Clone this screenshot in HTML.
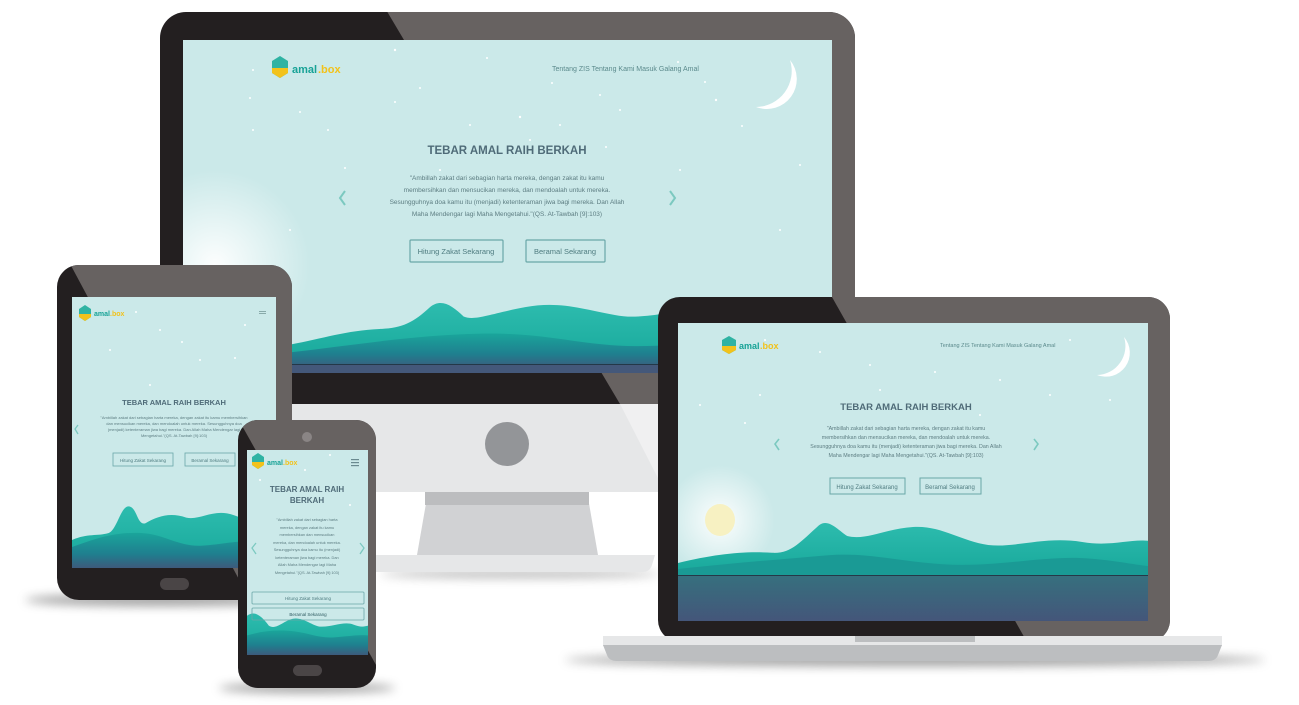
<!DOCTYPE html>
<html><head><meta charset="utf-8"><style>
html,body{margin:0;padding:0;background:#fff;width:1299px;height:705px;overflow:hidden}
svg{display:block}
text{font-family:"Liberation Sans",sans-serif}
</style></head><body>
<svg width="1299" height="705" viewBox="0 0 1299 705" xmlns="http://www.w3.org/2000/svg">
<defs>
<linearGradient id="mtB" x1="0" y1="0" x2="0" y2="1"><stop offset="0" stop-color="#2dbcae"/><stop offset="1" stop-color="#17a79a"/></linearGradient>
<linearGradient id="mtF" x1="0" y1="0" x2="0" y2="1"><stop offset="0" stop-color="#1aa59b"/><stop offset="0.6" stop-color="#1f7f8f"/><stop offset="1" stop-color="#3d5a7c"/></linearGradient>
<linearGradient id="sea" x1="0" y1="0" x2="0" y2="1"><stop offset="0" stop-color="#36707e"/><stop offset="1" stop-color="#44567a"/></linearGradient>
<radialGradient id="glow"><stop offset="0" stop-color="#ffffff" stop-opacity="0.95"/><stop offset="1" stop-color="#ffffff" stop-opacity="0"/></radialGradient>
<filter id="blur" x="-20%" y="-200%" width="140%" height="500%"><feGaussianBlur stdDeviation="5"/></filter>
<clipPath id="cMon"><rect x="160" y="12" width="695" height="392" rx="26"/></clipPath>
<clipPath id="cLap"><rect x="658" y="297" width="512" height="345" rx="22"/></clipPath>
<clipPath id="cTab"><rect x="57" y="265" width="235" height="335" rx="22"/></clipPath>
<clipPath id="cPh"><rect x="238" y="420" width="138" height="268" rx="20"/></clipPath>
<clipPath id="sMon"><rect x="183" y="40" width="649" height="333"/></clipPath>
<clipPath id="sLap"><rect x="678" y="323" width="470" height="298"/></clipPath>
<clipPath id="sTab"><rect x="72" y="297" width="204" height="271"/></clipPath>
<clipPath id="sPh"><rect x="247" y="450" width="121" height="205"/></clipPath>
<g id="mtn">
<path d="M0 70 C6 62 10 52 16 50 C20 49 22 42 25 22 C27 10 29 20 31 34 C33 40 36 30 42 22 C48 14 52 24 58 32 C62 38 66 30 72 26 C78 22 82 34 88 38 C92 40 96 34 100 33 V100 H0Z" fill="url(#mtB)"/>
<path d="M0 80 C12 70 22 58 34 56 C46 54 52 72 62 72 C72 72 78 60 86 62 C92 63 96 70 100 72 V100 H0Z" fill="url(#mtF)"/>
</g>
</defs>

<!-- MONITOR stand -->
<ellipse cx="520" cy="574" rx="140" ry="4" fill="#888" filter="url(#blur)" opacity="0.6"/>
<rect x="290" y="398" width="370" height="94" fill="#e6e7e8"/>
<path d="M618 400 L660 400 L660 482Z" fill="#f0f0f1"/>
<circle cx="507" cy="444" r="22" fill="#939598"/>
<path d="M428 492 L587 492 L598 555 L417 555Z" fill="#d1d2d4"/>
<rect x="425" y="492" width="164" height="13" fill="#bcbdbf"/>
<path d="M360 555 H655 L652 565 Q650 572 642 572 H370 Z" fill="#e6e7e8"/>
<!-- monitor body -->
<g clip-path="url(#cMon)">
<rect x="160" y="12" width="695" height="392" fill="#231f20"/>
<polygon points="385,8 860,8 860,404 620,404" fill="#676261"/>
</g>
<g clip-path="url(#sMon)">
<rect x="183" y="40" width="649" height="333" fill="#cbe9e9"/>
<circle cx="215" cy="265" r="95" fill="url(#glow)"/>
<g fill="#fff">
<circle cx="253" cy="70" r="1"/><circle cx="395" cy="50" r="1.2"/><circle cx="420" cy="88" r="1"/><circle cx="487" cy="58" r="1"/><circle cx="552" cy="83" r="1"/><circle cx="600" cy="95" r="1"/><circle cx="678" cy="62" r="1"/><circle cx="716" cy="100" r="1.2"/><circle cx="742" cy="126" r="1"/><circle cx="253" cy="130" r="1"/><circle cx="300" cy="112" r="1"/><circle cx="345" cy="168" r="1"/><circle cx="395" cy="102" r="1"/><circle cx="470" cy="125" r="1"/><circle cx="520" cy="117" r="1.2"/><circle cx="560" cy="125" r="1"/><circle cx="606" cy="147" r="1"/><circle cx="680" cy="170" r="1"/><circle cx="250" cy="98" r="1"/><circle cx="800" cy="165" r="1"/><circle cx="328" cy="130" r="1"/><circle cx="440" cy="170" r="1"/><circle cx="620" cy="110" r="1"/><circle cx="705" cy="82" r="1"/><circle cx="530" cy="140" r="1"/><circle cx="290" cy="230" r="1"/><circle cx="780" cy="230" r="1"/>
</g>
<path d="M790 60 A30 30 0 0 1 756 107 A36 36 0 0 0 790 60Z" fill="#fff"/>
<path d="M272 61 L280 56 L288 61 L288 73 L280 78 L272 73Z" fill="#2fb3a3"/><path d="M272 68 L288 68 L288 73 L280 78 L272 73Z" fill="#f2c21b"/>
<text x="292" y="73" font-size="11" font-weight="bold" fill="#17a296">amal</text><text x="318" y="73" font-size="11" font-weight="bold" fill="#f2c21b">.box</text>
<text x="552" y="71" font-size="7" fill="#5b8a8c">Tentang ZIS   Tentang Kami   Masuk   Galang Amal</text>
<text x="507" y="154" font-size="11.5" font-weight="bold" fill="#4f6b78" text-anchor="middle">TEBAR AMAL RAIH BERKAH</text>
<g font-size="6.5" fill="#5d7d82" text-anchor="middle">
<text x="507" y="180">"Ambillah zakat dari sebagian harta mereka, dengan zakat itu kamu</text>
<text x="507" y="192">membersihkan dan mensucikan mereka, dan mendoalah untuk mereka.</text>
<text x="507" y="204">Sesungguhnya doa kamu itu (menjadi) ketenteraman jiwa bagi mereka. Dan Allah</text>
<text x="507" y="216">Maha Mendengar lagi Maha Mengetahui."(QS. At-Tawbah [9]:103)</text>
</g>
<path d="M345 191 L340 198 L345 205" stroke="#7cc9c0" stroke-width="2" fill="none"/><path d="M670 191 L675 198 L670 205" stroke="#7cc9c0" stroke-width="2" fill="none"/>
<rect x="410" y="240" width="93" height="22" fill="none" stroke="#6aa7a8" stroke-width="1.2" rx="1"/><text x="456" y="254" font-size="7.5" fill="#4f7c80" text-anchor="middle">Hitung Zakat Sekarang</text>
<rect x="526" y="240" width="79" height="22" fill="none" stroke="#6aa7a8" stroke-width="1.2" rx="1"/><text x="565" y="254" font-size="7.5" fill="#4f7c80" text-anchor="middle">Beramal Sekarang</text>
<svg x="290" y="290" width="560" height="78" viewBox="0 0 100 100" preserveAspectRatio="none"><use href="#mtn"/></svg>
<rect x="183" y="364" width="649" height="10" fill="#44587a"/><rect x="183" y="364" width="649" height="1" fill="#243848"/>
</g>

<!-- LAPTOP shadow -->
<ellipse cx="915" cy="660" rx="350" ry="6" fill="#777" filter="url(#blur)" opacity="0.7"/>
<g clip-path="url(#cLap)">
<rect x="658" y="297" width="512" height="345" fill="#231f20"/>
<polygon points="828,290 1175,290 1175,642 1027,642" fill="#676261"/>
</g>
<g clip-path="url(#sLap)">
<rect x="678" y="323" width="470" height="298" fill="#cbe9e9"/>
<circle cx="720" cy="520" r="55" fill="url(#glow)"/>
<ellipse cx="720" cy="520" rx="15" ry="16" fill="#f7f1c2"/>
<g fill="#fff"><circle cx="765" cy="340" r="1"/><circle cx="820" cy="352" r="1"/><circle cx="870" cy="365" r="1"/><circle cx="935" cy="372" r="1"/><circle cx="1000" cy="380" r="1"/><circle cx="1050" cy="395" r="1"/><circle cx="700" cy="405" r="1"/><circle cx="745" cy="423" r="1"/><circle cx="980" cy="415" r="1"/><circle cx="1070" cy="340" r="1"/><circle cx="1110" cy="400" r="1"/><circle cx="760" cy="395" r="1"/><circle cx="880" cy="390" r="1"/></g>
<path d="M1124 337 A24 24 0 0 1 1097 375 A29 29 0 0 0 1124 337Z" fill="#fff"/>
<path d="M722 340 L729 336 L736 340 L736 350 L729 354 L722 350Z" fill="#2fb3a3"/><path d="M722 346 L736 346 L736 350 L729 354 L722 350Z" fill="#f2c21b"/>
<text x="739" y="349" font-size="9" font-weight="bold" fill="#17a296">amal</text><text x="760" y="349" font-size="9" font-weight="bold" fill="#f2c21b">.box</text>
<text x="940" y="347" font-size="5.5" fill="#5b8a8c">Tentang ZIS   Tentang Kami   Masuk   Galang Amal</text>
<text x="906" y="410" font-size="9.5" font-weight="bold" fill="#4f6b78" text-anchor="middle">TEBAR AMAL RAIH BERKAH</text>
<g font-size="5.3" fill="#5d7d82" text-anchor="middle">
<text x="906" y="430">"Ambillah zakat dari sebagian harta mereka, dengan zakat itu kamu</text>
<text x="906" y="439">membersihkan dan mensucikan mereka, dan mendoalah untuk mereka.</text>
<text x="906" y="448">Sesungguhnya doa kamu itu (menjadi) ketenteraman jiwa bagi mereka. Dan Allah</text>
<text x="906" y="457">Maha Mendengar lagi Maha Mengetahui."(QS. At-Tawbah [9]:103)</text>
</g>
<path d="M779 439 L775 444 L779 450" stroke="#7cc9c0" stroke-width="1.6" fill="none"/><path d="M1034 439 L1038 444 L1034 450" stroke="#7cc9c0" stroke-width="1.6" fill="none"/>
<rect x="830" y="478" width="75" height="16" fill="none" stroke="#6aa7a8" stroke-width="1"/><text x="867" y="489" font-size="6" fill="#4f7c80" text-anchor="middle">Hitung Zakat Sekarang</text>
<rect x="920" y="478" width="61" height="16" fill="none" stroke="#6aa7a8" stroke-width="1"/><text x="950" y="489" font-size="6" fill="#4f7c80" text-anchor="middle">Beramal Sekarang</text>
<svg x="678" y="518" width="470" height="60" viewBox="0 0 100 100" preserveAspectRatio="none"><path d="M0 75 C8 60 14 55 20 58 C24 60 26 40 30 12 C32 0 34 20 36 30 C40 38 44 18 50 15 C56 12 60 38 66 45 C72 50 78 30 86 40 C92 48 96 35 100 38 V100 H0Z" fill="url(#mtB)"/><path d="M0 85 C12 75 20 70 32 62 C42 56 50 80 62 78 C72 76 80 62 88 68 C94 72 97 78 100 80 V100 H0Z" fill="#1a9a95"/></svg>
<rect x="678" y="575" width="470" height="46" fill="url(#sea)"/><rect x="678" y="575" width="470" height="1" fill="#263848"/>
</g>
<rect x="603" y="636" width="619" height="10" fill="#e6e7e8"/>
<path d="M603 645 H1222 L1218 655 Q1216 661 1208 661 H617 Q609 661 607 655Z" fill="#bcbec0"/>
<rect x="855" y="636" width="120" height="6" fill="#bcbec0"/>

<!-- TABLET -->
<ellipse cx="160" cy="600" rx="135" ry="6" fill="#777" filter="url(#blur)" opacity="0.7"/>
<g clip-path="url(#cTab)">
<rect x="57" y="265" width="235" height="335" fill="#231f20"/>
<polygon points="68,260 300,260 300,600 250,600" fill="#676261"/>
</g>
<g clip-path="url(#sTab)">
<rect x="72" y="297" width="204" height="271" fill="#cbe9e9"/>
<g fill="#fff"><circle cx="136" cy="312" r="1"/><circle cx="160" cy="330" r="1"/><circle cx="182" cy="342" r="1"/><circle cx="110" cy="350" r="1"/><circle cx="235" cy="358" r="1"/><circle cx="150" cy="385" r="1"/><circle cx="245" cy="325" r="1"/><circle cx="200" cy="360" r="1"/></g>
<path d="M79 309 L85 305 L91 309 L91 317 L85 321 L79 317Z" fill="#2fb3a3"/><path d="M79 314 L91 314 L91 317 L85 321 L79 317Z" fill="#f2c21b"/>
<text x="94" y="316" font-size="7" font-weight="bold" fill="#17a296">amal</text><text x="110" y="316" font-size="7" font-weight="bold" fill="#f2c21b">.box</text>
<rect x="259" y="311" width="7" height="1" fill="#8aa"/><rect x="259" y="313" width="7" height="1" fill="#8aa"/>
<text x="174" y="405" font-size="7.5" font-weight="bold" fill="#4f6b78" text-anchor="middle">TEBAR AMAL RAIH BERKAH</text>
<g font-size="4" fill="#5d7d82" text-anchor="middle">
<text x="174" y="419">"Ambillah zakat dari sebagian harta mereka, dengan zakat itu kamu membersihkan</text>
<text x="174" y="425">dan mensucikan mereka, dan mendoalah untuk mereka. Sesungguhnya doa</text>
<text x="174" y="431">(menjadi) ketenteraman jiwa bagi mereka. Dan Allah Maha Mendengar lagi</text>
<text x="174" y="437">Mengetahui."(QS. At-Tawbah [9]:103)</text>
</g>
<path d="M78 425 L75 429 L78 434" stroke="#7cc9c0" stroke-width="1.3" fill="none"/>
<rect x="113" y="453" width="60" height="13" fill="none" stroke="#6aa7a8" stroke-width="0.8"/><text x="143" y="462" font-size="4.5" fill="#4f7c80" text-anchor="middle">Hitung Zakat Sekarang</text>
<rect x="185" y="453" width="50" height="13" fill="none" stroke="#6aa7a8" stroke-width="0.8"/><text x="210" y="462" font-size="4.5" fill="#4f7c80" text-anchor="middle">Beramal Sekarang</text>
<svg x="72" y="498" width="204" height="70" viewBox="0 0 100 100" preserveAspectRatio="none"><path d="M0 60 C8 50 12 55 18 50 C22 46 24 10 28 12 C32 14 32 40 36 36 C42 26 48 20 56 28 C62 32 68 18 76 22 C84 26 92 46 100 50 V100 H0Z" fill="url(#mtB)"/><path d="M0 70 C10 60 20 48 34 50 C46 52 52 70 64 68 C76 66 82 58 100 64 V100 H0Z" fill="url(#mtF)"/></svg>
</g>
<rect x="160" y="578" width="29" height="12" rx="6" fill="#4a4546"/>

<!-- PHONE -->
<ellipse cx="307" cy="688" rx="88" ry="5" fill="#777" filter="url(#blur)" opacity="0.7"/>
<g clip-path="url(#cPh)">
<rect x="238" y="420" width="138" height="268" fill="#231f20"/>
<polygon points="236,415 380,415 380,672" fill="#676261"/>
</g>
<circle cx="307" cy="437" r="5" fill="#8a8585"/>
<rect x="293" y="665" width="29" height="11" rx="5.5" fill="#4a4546"/>
<g clip-path="url(#sPh)">
<rect x="247" y="450" width="121" height="205" fill="#cbe9e9"/>
<g fill="#fff"><circle cx="305" cy="470" r="1"/><circle cx="330" cy="455" r="1"/><circle cx="260" cy="480" r="1"/><circle cx="350" cy="505" r="1"/></g>
<path d="M252 457 L258 453 L264 457 L264 465 L258 469 L252 465Z" fill="#2fb3a3"/><path d="M252 462 L264 462 L264 465 L258 469 L252 465Z" fill="#f2c21b"/>
<text x="267" y="465" font-size="7" font-weight="bold" fill="#17a296">amal</text><text x="283" y="465" font-size="7" font-weight="bold" fill="#f2c21b">.box</text>
<rect x="351" y="459" width="8" height="1.2" fill="#6a8a90"/><rect x="351" y="462" width="8" height="1.2" fill="#6a8a90"/><rect x="351" y="465" width="8" height="1.2" fill="#6a8a90"/>
<text x="307" y="492" font-size="8" font-weight="bold" fill="#4f6b78" text-anchor="middle">TEBAR AMAL RAIH</text>
<text x="307" y="503" font-size="8" font-weight="bold" fill="#4f6b78" text-anchor="middle">BERKAH</text>
<g font-size="3.9" fill="#5d7d82" text-anchor="middle">
<text x="307" y="521">"Ambillah zakat dari sebagian harta</text>
<text x="307" y="529">mereka, dengan zakat itu kamu</text>
<text x="307" y="536">membersihkan dan mensucikan</text>
<text x="307" y="544">mereka, dan mendoalah untuk mereka.</text>
<text x="307" y="551">Sesungguhnya doa kamu itu (menjadi)</text>
<text x="307" y="559">ketenteraman jiwa bagi mereka. Dan</text>
<text x="307" y="566">Allah Maha Mendengar lagi Maha</text>
<text x="307" y="574">Mengetahui."(QS. At-Tawbah [9]:103)</text>
</g>
<path d="M256 543 L252 548 L256 554" stroke="#7cc9c0" stroke-width="1.3" fill="none"/><path d="M360 543 L364 548 L360 554" stroke="#7cc9c0" stroke-width="1.3" fill="none"/>
<svg x="247" y="606" width="121" height="49" viewBox="0 0 100 100" preserveAspectRatio="none"><path d="M0 20 C6 8 12 20 18 40 C24 50 30 30 38 26 C46 22 54 40 60 42 C70 44 80 30 88 38 C94 44 97 42 100 40 V100 H0Z" fill="url(#mtB)"/><path d="M0 60 C14 50 26 48 40 52 C52 56 60 66 72 64 C84 62 92 58 100 60 V100 H0Z" fill="url(#mtF)"/></svg>
<rect x="252" y="592" width="112" height="12" rx="1" fill="none" stroke="#6aa7a8" stroke-width="0.8"/><text x="308" y="600" font-size="4.5" fill="#4f7c80" text-anchor="middle">Hitung Zakat Sekarang</text>
<rect x="252" y="608" width="112" height="12" rx="1" fill="none" stroke="#6aa7a8" stroke-width="0.8"/><text x="308" y="616" font-size="4.5" fill="#2e5a60" text-anchor="middle">Beramal Sekarang</text>
</g>
</svg>
</body></html>
